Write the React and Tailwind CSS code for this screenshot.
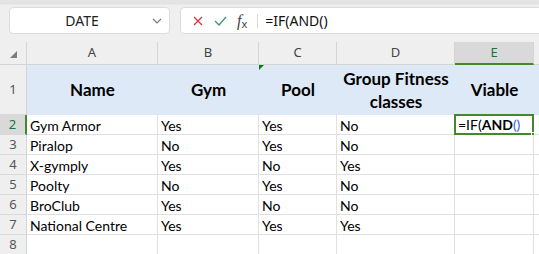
import React from "react";

const cols = [
  { key: "A", w: "w-[131px]" },
  { key: "B", w: "w-[101px]" },
  { key: "C", w: "w-[78px]" },
  { key: "D", w: "w-[118px]" },
  { key: "E", w: "w-[79px]" },
];

const rows = [
  ["Gym Armor", "Yes", "Yes", "No"],
  ["Piralop", "No", "Yes", "No"],
  ["X-gymply", "Yes", "No", "Yes"],
  ["Poolty", "No", "Yes", "No"],
  ["BroClub", "Yes", "No", "No"],
  ["National Centre", "Yes", "Yes", "Yes"],
  ["", "", "", ""],
];

function RowNum({ n, active }) {
  return (
    <div
      className={
        "w-[27px] shrink-0 flex items-center justify-center border-b border-[#dadada] text-[13px] font-['Noto_Sans',sans-serif] " +
        (active
          ? "bg-[#d9d9d9] text-[#1e7145] border-r-2 border-r-[#41892c]"
          : "text-[#555] border-r border-r-[#d4d4d4]")
      }
    >
      {n}
    </div>
  );
}

export default function App() {
  return (
    <div className="w-[539px] h-[254px] overflow-hidden bg-[#efefef] font-['Lato',sans-serif]">
      {/* formula bar */}
      <div className="h-[3px] bg-[#e4e4e4] shadow-[0_1px_2px_rgba(0,0,0,0.08)]" />
      <div className="flex items-start pt-[4px] pl-[9px] h-[39px]">
        <div className="w-[161px] h-[27px] bg-white rounded-[4px] border border-[#dcdcdc] flex items-center shrink-0">
          <div className="flex-1 text-center text-[14px] text-[#222] font-['Noto_Sans',sans-serif] pl-[2px]">
            DATE
          </div>
          <svg width="10" height="6" viewBox="0 0 10 6" className="mr-[7px]">
            <path d="M1 1l4 4 4-4" fill="none" stroke="#777" strokeWidth="1.1" />
          </svg>
        </div>
        <div className="ml-[10px] w-[380px] h-[27px] bg-white rounded-[4px] border border-[#dcdcdc] flex items-center shrink-0">
          <svg width="10" height="10" viewBox="0 0 10 10" className="ml-[12px]">
            <path d="M1 1l8 8M9 1l-8 8" stroke="#d13438" strokeWidth="1.2" />
          </svg>
          <svg width="13" height="10" viewBox="0 0 13 10" className="ml-[11px]">
            <path d="M1 5l4 4 7-8" fill="none" stroke="#3a9b6a" strokeWidth="1.3" />
          </svg>
          <span className="ml-[10px] text-[16px] italic text-[#444] font-['Liberation_Serif',serif] leading-none">
            f<sub className="text-[11px] not-italic font-['Noto_Sans',sans-serif]">x</sub>
          </span>
          <div className="ml-[10px] w-px h-[14px] bg-[#d8d8d8]" />
          <div className="ml-[7px] text-[14px] text-[#111] font-['Noto_Sans',sans-serif]">=IF(AND()</div>
        </div>
      </div>

      {/* column headers */}
      <div className="flex h-[23px] border-b border-[#d4d4d4]">
        <div className="w-[27px] shrink-0 relative border-r border-[#d4d4d4]">
          <svg width="7" height="7" viewBox="0 0 7 7" className="absolute left-[10px] top-[9px]">
            <polygon points="7,0 7,7 0,7" fill="#7b7b7b" />
          </svg>
        </div>
        {cols.map((c) => (
          <div
            key={c.key}
            className={
              c.w +
              " shrink-0 flex items-center justify-center text-[13px] font-['Noto_Sans',sans-serif] border-r border-[#d4d4d4] " +
              (c.key === "E"
                ? "bg-[#d9d9d9] text-[#1e7145] border-b-2 border-b-[#41892c] -mb-[1px]"
                : "text-[#444]")
            }
          >
            {c.key}
          </div>
        ))}
        <div className="flex-1" />
      </div>

      {/* row 1 */}
      <div className="flex h-[50px]">
        <RowNum n={1} />
        <div className="flex flex-1 bg-[#dde9f6] font-bold text-[17px] text-black">
          <div className="w-[131px] shrink-0 flex items-center justify-center">Name</div>
          <div className="w-[101px] shrink-0 flex items-center justify-center">Gym</div>
          <div className="w-[78px] shrink-0 flex items-center justify-center relative">
            Pool
            <svg width="5" height="5" viewBox="0 0 5 5" className="absolute left-0 top-0">
              <polygon points="0,0 5,0 0,5" fill="#0c7a0c" />
            </svg>
          </div>
          <div className="w-[118px] shrink-0 flex items-center justify-center text-center leading-[23px]">
            Group Fitness
            <br />
            classes
          </div>
          <div className="w-[79px] shrink-0 flex items-center justify-center">Viable</div>
        </div>
      </div>

      {/* data rows */}
      {rows.map((r, i) => (
        <div key={i} className="flex h-[20px]">
          <RowNum n={i + 2} active={i === 0} />
          {cols.map((c, j) => (
            <div
              key={c.key}
              className={
                c.w +
                " shrink-0 bg-white border-r border-b border-[#e1e1e1] pl-[3px] text-[14px] leading-[19px] pt-[1px] text-black whitespace-nowrap relative"
              }
            >
              {j < 4 ? r[j] : null}
              {i === 0 && c.key === "E" && (
                <div className="absolute -left-[1px] -top-[1px] w-[80px] h-[21px] border-2 border-[#41892c] pl-[2px] leading-[17px] bg-white">
                  =IF(<span className="font-bold">AND</span>
                  <span className="text-[#3b5bd6]">()</span>
                  <div className="absolute -right-[3px] -bottom-[3px] w-[4px] h-[4px] bg-[#41892c] border border-white" />
                </div>
              )}
            </div>
          ))}
          <div className="flex-1 bg-white border-b border-[#e1e1e1]" />
        </div>
      ))}
    </div>
  );
}
